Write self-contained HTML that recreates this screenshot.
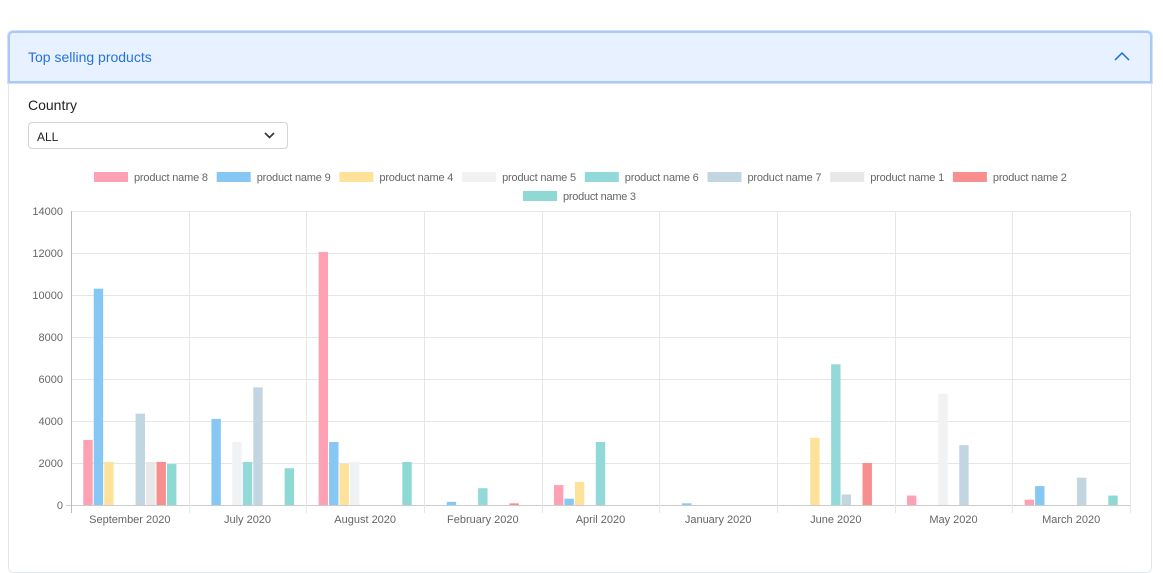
<!DOCTYPE html>
<html><head><meta charset="utf-8"><style>
body{margin:0;width:1163px;height:553px;background:#fff;font-family:"Liberation Sans",sans-serif;overflow:hidden;position:relative}
.card{position:absolute;left:8px;top:31px;width:1142px;height:540px;border:1px solid #e3e6ea;border-radius:5px}
.hdr{position:absolute;left:8px;top:31px;width:1140px;height:48px;background:#e7f1ff;border:2px solid #a9c9f7;border-radius:5px 5px 0 0;box-shadow:0 0 0 1px #cfe0fb}
.hdr span{position:absolute;left:18px;top:16px;font-size:14px;color:#2572e0}
.lbl{position:absolute;left:28px;top:97px;font-size:14px;color:#222}
.sel{position:absolute;left:28px;top:122px;width:260px;height:27px;border:1px solid #ced4da;border-radius:4px;box-sizing:border-box}
.sel span{position:absolute;left:8px;top:7px;font-size:12px;color:#222}
svg text{font-family:"Liberation Sans",sans-serif;font-size:11px;fill:#666}
</style></head><body>
<div class="card"></div>
<div class="hdr"><span>Top selling products</span>
<svg style="position:absolute;right:20px;top:18px" width="16" height="10"><path d="M1 9 L8 2 L15 9" fill="none" stroke="#1a6ae0" stroke-width="1.5"/></svg></div>
<div class="lbl">Country</div>
<div class="sel"><span>ALL</span><svg style="position:absolute;right:12px;top:9px" width="11" height="7"><path d="M1 1 L5.5 5.5 L10 1" fill="none" stroke="#333" stroke-width="1.6"/></svg></div>
<svg id="c" style="position:absolute;left:0;top:0" width="1163" height="553"></svg>
<script>
const cols=['#ffa1b5','#86c7f3','#ffe29a','#f1f2f4','#93d9d9','#c2d6e1','#e8e8e8','#f88e8e','#8fd9d4'];
const names=['product name 8','product name 9','product name 4','product name 5','product name 6','product name 7','product name 1','product name 2','product name 3'];
const cats=['September 2020','July 2020','August 2020','February 2020','April 2020','January 2020','June 2020','May 2020','March 2020'];
const data=[
[3100,10300,2050,0,0,4350,2050,2050,1950],
[0,4100,0,3000,2050,5600,0,0,1750],
[12050,3000,1950,2050,0,0,0,0,2050],
[0,150,0,0,800,0,0,80,0],
[950,300,1100,0,3000,0,0,0,0],
[0,80,0,0,0,0,0,0,0],
[0,0,3200,0,6700,500,0,2000,0],
[450,0,0,5300,0,2850,0,0,0],
[250,900,0,0,0,1300,0,0,450]];
let s='';
const L=71,R=1130,T=211,B=505,cw=(R-L)/9;
for(let i=0;i<=7;i++){let y=B-i*2000*(B-T)/14000;s+=`<line x1="${i==0?L-5:L}" x2="${R}" y1="${y+.5}" y2="${y+.5}" stroke="${i==0?'#ccc':'#e6e6e6'}"/>`;s+=`<text x="${L-8}" y="${y+4}" text-anchor="end">${i*2000}</text>`;}
for(let c=0;c<=9;c++){let x=Math.round(L+c*cw)+.5;s+=`<line x1="${x}" x2="${x}" y1="${T}" y2="${B+8}" stroke="${c==0?'#bbb':'#e6e6e6'}"/>`;}
for(let c=0;c<9;c++){let cs=L+c*cw+cw*0.1,bw=cw*0.8/9;
 s+=`<text x="${L+c*cw+cw/2}" y="${B+18}" text-anchor="middle">${cats[c]}</text>`;
 for(let i=0;i<9;i++){let v=data[c][i];if(!v)continue;let h=v*(B-T)/14000;
  s+=`<rect x="${cs+i*bw+bw*0.05}" y="${B-h}" width="${bw*0.9}" height="${h}" fill="${cols[i]}"/>`;}}
for(let i=0;i<9;i++){let x,y;if(i<8){x=94+i*122.7;y=172}else{x=523;y=191}
 s+=`<rect x="${x}" y="${y}" width="34" height="10" fill="${cols[i]}"/><text x="${x+40}" y="${y+9}" textLength="${i<8?74:73}">${names[i]}</text>`;}
document.getElementById('c').innerHTML=s;
</script>
</body></html>
